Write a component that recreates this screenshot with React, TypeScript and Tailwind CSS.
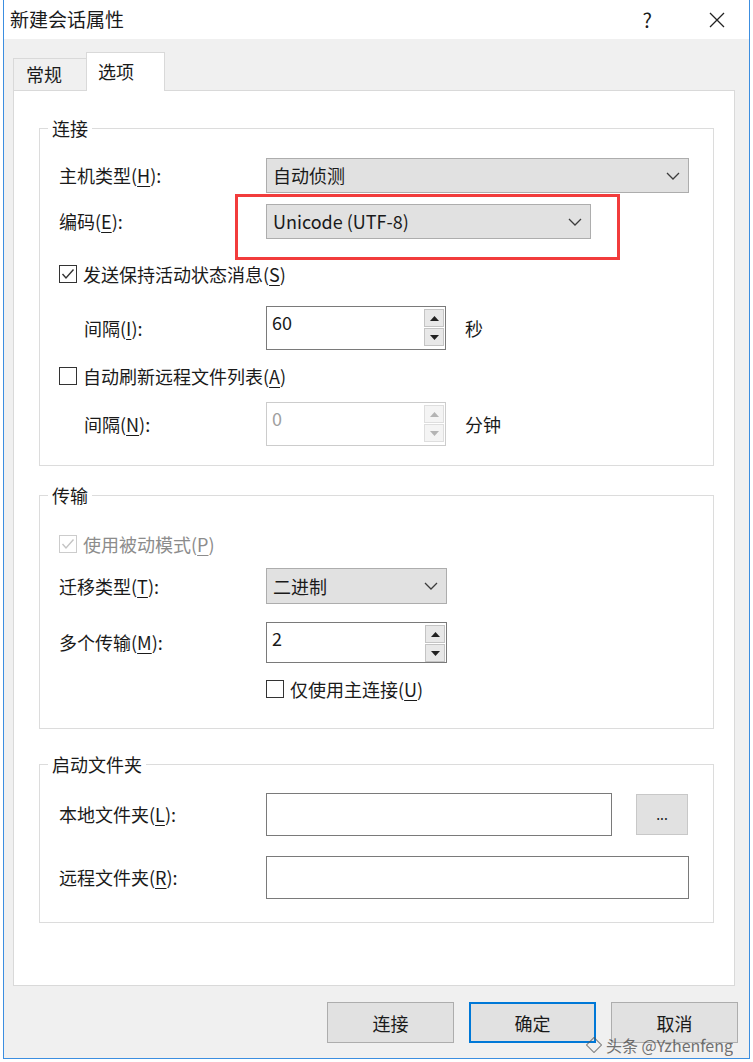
import type { ReactNode } from "react";

const font = "font-['Noto_Sans_CJK_SC','Noto_Sans',sans-serif]";

function Mn({ children }: { children: ReactNode }) {
  return <span className="underline decoration-1 underline-offset-[3px]">{children}</span>;
}

function Chevron() {
  return (
    <svg width="14" height="8" viewBox="0 0 14 8" fill="none">
      <polyline points="1,1 7,7 13,1" stroke="#3c3c3c" strokeWidth="1.3" />
    </svg>
  );
}

function Dropdown({ text, className }: { text: string; className: string }) {
  return (
    <div className={`flex items-center justify-between border border-[#adadad] bg-[#e1e1e1] pl-[6px] pr-[8px] ${className}`}>
      <span>{text}</span>
      <Chevron />
    </div>
  );
}

function Arrow({ up, color }: { up?: boolean; color: string }) {
  return (
    <svg width="9" height="5" viewBox="0 0 9 5">
      <polygon points={up ? "0,5 9,5 4.5,0" : "0,0 9,0 4.5,5"} fill={color} />
    </svg>
  );
}

function Spin({ value, disabled, className }: { value: string; disabled?: boolean; className: string }) {
  const c = disabled ? "#b4b4b4" : "#222";
  const btn = disabled ? "border-[#dedede] bg-[#f4f4f4]" : "border-[#c4c4c4] bg-[#e8e8e8]";
  return (
    <div
      className={`flex justify-between border bg-white ${
        disabled ? "border-[#cccccc] text-[#a0a0a0]" : "border-[#7a7a7a]"
      } ${className}`}
    >
      <span className="pl-[5px] pt-[3px] leading-[24px]">{value}</span>
      <div className="mr-[1px] mt-[2px] flex flex-col gap-[1px]">
        <div className={`flex h-[18px] w-[20px] items-center justify-center border ${btn}`}>
          <Arrow up color={c} />
        </div>
        <div className={`flex h-[18px] w-[20px] items-center justify-center border ${btn}`}>
          <Arrow color={c} />
        </div>
      </div>
    </div>
  );
}

function Check({ checked, disabled, label }: { checked?: boolean; disabled?: boolean; label: ReactNode }) {
  return (
    <div className={`flex items-center gap-[6px] ${disabled ? "text-[#8c8c8c]" : ""}`}>
      <div className={`flex h-[18px] w-[18px] items-center justify-center border bg-white ${disabled ? "border-[#cccccc]" : "border-[#333333]"}`}>
        {checked && (
          <svg width="14" height="12" viewBox="0 0 14 12" fill="none">
            <polyline points="1.5,6 5,10 12.5,1.5" stroke={disabled ? "#c4c4c4" : "#333"} strokeWidth="1.4" />
          </svg>
        )}
      </div>
      <span>{label}</span>
    </div>
  );
}

function Group({ title, className, children }: { title: string; className?: string; children: ReactNode }) {
  return (
    <fieldset className={`ml-[25px] w-[675px] border border-[#dcdcdc] ${className ?? ""}`}>
      <legend className="ml-[8px] px-[4px] leading-[24px]">{title}</legend>
      {children}
    </fieldset>
  );
}

function Row({ label, indent, className, children }: { label: ReactNode; indent?: boolean; className: string; children: ReactNode }) {
  return (
    <div className={`flex items-center pl-[19px] ${className}`}>
      <div className={indent ? "w-[207px] pl-[25px]" : "w-[207px]"}>{label}</div>
      {children}
    </div>
  );
}

function Button({ children, primary }: { children: ReactNode; primary?: boolean }) {
  return (
    <div
      className={`flex h-[41px] w-[127px] items-center justify-center bg-[#e1e1e1] leading-[20px] ${
        primary ? "border-2 border-[#0078d7]" : "border border-[#adadad]"
      }`}
    >
      {children}
    </div>
  );
}

export default function App() {
  return (
    <div className={`h-[1062px] w-[753px] bg-white text-[18px] text-[#1a1a1a] ${font}`}>
      <div className="relative ml-[3px] flex h-[1059px] w-[747px] flex-col border-x border-b border-[#3c8ee0]">
        <div className="flex h-[39px] items-center justify-between bg-white pl-[6px] pr-[24px]">
          <span className="text-[19px]">新建会话属性</span>
          <div className="flex items-center gap-[57px]">
            <span className="text-[20px]">?</span>
            <svg width="16" height="16" viewBox="0 0 16 16">
              <path d="M1 1 L15 15 M15 1 L1 15" stroke="#222" strokeWidth="1.3" />
            </svg>
          </div>
        </div>

        <div className="flex flex-1 flex-col bg-[#f0f0f0]">
          <div className="ml-[9px] flex items-end pt-[13px]">
            <div className="h-[32px] w-[74px] border border-b-0 border-[#d9d9d9] bg-[#f0f0f0] pl-[12px] pt-[3px] leading-[24px]">常规</div>
            <div className="relative z-10 -mb-px -ml-px h-[39px] w-[79px] border border-b-0 border-[#d9d9d9] bg-white pl-[11px] pt-[6px] leading-[24px]">
              选项
            </div>
          </div>

          <div className="ml-[9px] h-[896px] w-[722px] border border-[#d9d9d9] bg-white pt-[25px]">
            <Group title="连接" className="pb-[19px]">
              <Row label={<>主机类型(<Mn>H</Mn>):</>} className="mt-[18px] h-[35px]">
                <Dropdown text="自动侦测" className="h-[35px] w-[423px]" />
              </Row>
              <Row label={<>编码(<Mn>E</Mn>):</>} className="mt-[11px] h-[35px]">
                <div className="relative">
                  <Dropdown text="Unicode (UTF-8)" className="h-[35px] w-[325px]" />
                  <div className="absolute -left-[31px] -top-[10px] h-[66px] w-[385px] border-[3px] border-[#f23c3c]" />
                </div>
              </Row>
              <div className="mt-[23px] flex h-[24px] items-center pl-[19px]">
                <Check checked label={<>发送保持活动状态消息(<Mn>S</Mn>)</>} />
              </div>
              <Row label={<>间隔(<Mn>I</Mn>):</>} indent className="mt-[20px] h-[44px]">
                <Spin value="60" className="h-[44px] w-[180px]" />
                <span className="ml-[19px]">秒</span>
              </Row>
              <div className="mt-[14px] flex h-[24px] items-center pl-[19px]">
                <Check label={<>自动刷新远程文件列表(<Mn>A</Mn>)</>} />
              </div>
              <Row label={<>间隔(<Mn>N</Mn>):</>} indent className="mt-[14px] h-[44px]">
                <Spin value="0" disabled className="h-[44px] w-[180px]" />
                <span className="ml-[19px]">分钟</span>
              </Row>
            </Group>

            <Group title="传输" className="mt-[17px] pb-[27px]">
              <div className="mt-[25px] flex h-[24px] items-center pl-[19px]">
                <Check checked disabled label={<>使用被动模式(<Mn>P</Mn>)</>} />
              </div>
              <Row label={<>迁移类型(<Mn>T</Mn>):</>} className="mt-[12px] h-[36px]">
                <Dropdown text="二进制" className="h-[36px] w-[181px]" />
              </Row>
              <Row label={<>多个传输(<Mn>M</Mn>):</>} className="mt-[18px] h-[41px]">
                <Spin value="2" className="h-[41px] w-[181px]" />
              </Row>
              <div className="mt-[14px] flex h-[24px] items-center pl-[226px]">
                <Check label={<>仅使用主连接(<Mn>U</Mn>)</>} />
              </div>
            </Group>

            <Group title="启动文件夹" className="mt-[23px] pb-[23px]">
              <Row label={<>本地文件夹(<Mn>L</Mn>):</>} className="mt-[17px] h-[43px]">
                <div className="h-[43px] w-[346px] border border-[#7a7a7a] bg-white" />
                <div className="ml-[24px] flex h-[41px] w-[52px] items-center justify-center border border-[#c8c8c8] bg-[#e1e1e1] text-[14px]">
                  ...
                </div>
              </Row>
              <Row label={<>远程文件夹(<Mn>R</Mn>):</>} className="mt-[20px] h-[43px]">
                <div className="h-[43px] w-[423px] border border-[#7a7a7a] bg-white" />
              </Row>
            </Group>
          </div>

          <div className="mt-[16px] flex justify-end gap-[15px] pr-[11px]">
            <Button>连接</Button>
            <Button primary>确定</Button>
            <Button>取消</Button>
          </div>
        </div>

        <div className="absolute left-[582px] top-[1035px] flex items-center gap-[4px] text-[16px] leading-[20px] text-[#3a3a3a] opacity-70">
          <svg width="16" height="16" viewBox="0 0 18 18" fill="none">
            <rect x="3" y="3" width="12" height="12" stroke="#555" strokeWidth="1.2" transform="rotate(45 9 9)" />
          </svg>
          <span>头条 @Yzhenfeng</span>
        </div>
      </div>
    </div>
  );
}
